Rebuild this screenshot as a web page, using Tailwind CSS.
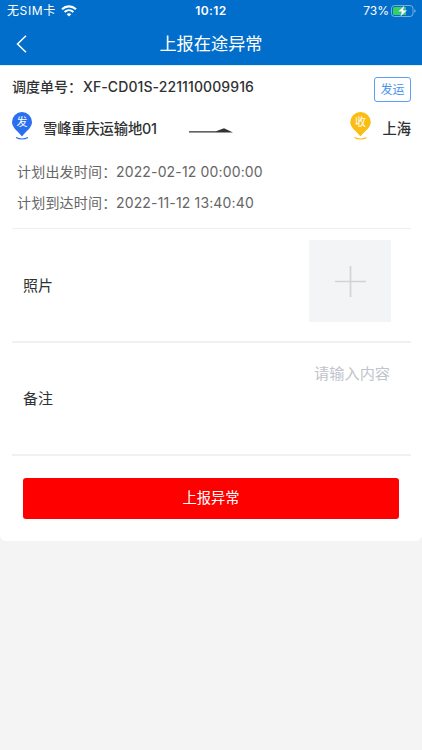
<!DOCTYPE html>
<html lang="zh-CN">

<head>
    <meta charset="UTF-8" />
    <meta name="viewport" content="width=device-width, initial-scale=1.0" />
    <title>上报在途异常</title>
    <script src="https://cdn.jsdelivr.net/npm/@tailwindcss/browser@4"></script>
</head>

<body class="bg-[#f4f4f4] font-['Inter','Noto_Sans_CJK_SC',sans-serif] text-[#303133]">
    <header class="bg-[#026ecb] text-white h-[65px]">
        <!-- Status bar -->
        <div class="grid grid-cols-3 items-center h-[22px] px-[7px] text-xs leading-none">
            <div class="flex items-center">
                <span class="tracking-[0.6px] whitespace-nowrap">无SIM卡</span>
                <svg class="ml-[5px] w-4 h-3" viewBox="0 0 16 12" fill="none" stroke="white" stroke-width="2.1">
                    <path d="M1 4.2C5 .4 11 .4 15 4.2" />
                    <path d="M3.6 7C6.2 4.6 9.8 4.6 12.4 7" />
                    <path d="M8 11.6 5.7 9.2Q8 7.2 10.3 9.2Z" fill="white" stroke="none" />
                </svg>
            </div>
            <div class="text-center font-semibold tracking-[0.4px]">10:12</div>
            <div class="flex items-center justify-end">
                <span>73%</span>
                <svg class="ml-[2px] -mr-[1px] w-[25px] h-3" viewBox="0 0 25 12">
                    <rect x=".5" y=".5" width="21.5" height="11" rx="3" fill="none" stroke="white" stroke-opacity=".45" />
                    <path d="M3.5 2H15V10H3.5Q2 10 2 8.5V3.5Q2 2 3.5 2Z" fill="#35d15c" />
                    <path d="M23.3 4.2Q24.7 4.8 24.7 6T23.3 7.8Z" fill="white" fill-opacity=".5" />
                    <path d="M13.4 .3 6.8 6.8H10.5L9.3 11.8 16.3 5.2H12.4Z" fill="white" stroke="#026ecb" stroke-width=".3" />
                </svg>
            </div>
        </div>
        <!-- Title bar -->
        <div class="grid grid-cols-[40px_1fr_40px] items-center h-[43px]">
            <button class="pl-4">
                <svg class="w-[11px] h-[18px]" viewBox="0 0 11 18" fill="none" stroke="white" stroke-width="1.5">
                    <path d="M10 .8 1.5 9 10 17.2" />
                </svg>
            </button>
            <h1 class="text-center text-[17.2px] leading-[42px]">上报在途异常</h1>
        </div>
    </header>

    <main class="bg-white rounded-b-md h-[476px] pl-3 pr-[11px] border-t border-[#d9f0fb]">
        <div class="flex items-center justify-between h-[43px]">
            <div class="flex -mt-[2px] text-sm font-medium whitespace-nowrap">
                <span class="w-[71px]">调度单号：</span>
                <span class="tracking-[0.1px]">XF-CD01S-221110009916</span>
            </div>
            <span class="mt-[3px] w-[37px] h-[25px] rounded-[3px] border border-[#5a9ef5] text-center text-xs leading-[23px] text-[#4592f0]">发运</span>
        </div>

        <!-- Route -->
        <div class="flex items-center h-9 mt-px text-[14.3px] font-medium">
            <svg class="w-5 h-7 -mt-[5px]" viewBox="0 0 20 28">
                <path d="M10 0A10 10 0 0 1 20 10C20 16 13.5 19.5 10 24.5 6.5 19.5 0 16 0 10A10 10 0 0 1 10 0Z" fill="#2a6fee" />
                <path d="M4 25.5Q10 28.5 16 25.5" fill="none" stroke="#2a6fee" stroke-width="1.2" />
                <text x="10" y="14" text-anchor="middle" font-size="11" font-weight="400" fill="white">发</text>
            </svg>
            <span class="ml-[11px] mt-[2px] w-[146px] tracking-[-0.15px]">雪峰重庆运输地01</span>
            <svg class="mt-[5px] w-11 h-[5px]" viewBox="0 0 44 5">
                <path d="M0 3.2H27L35 .2 44 4.6H0Z" fill="#333" />
            </svg>
            <svg class="ml-auto w-[21px] h-7 -mt-[5px]" viewBox="0 0 21 28">
                <path d="M10.5 0A10.3 10.3 0 0 1 20.8 10C20.8 16 14 19.5 10.5 24.5 7 19.5 .2 16 .2 10A10.3 10.3 0 0 1 10.5 0Z" fill="#fbbc13" />
                <path d="M4.5 25.5Q10.5 28.5 16.5 25.5" fill="none" stroke="#fbbc13" stroke-width="1.2" />
                <text x="10.5" y="14" text-anchor="middle" font-size="11" font-weight="400" fill="white">收</text>
            </svg>
            <span class="ml-[11px] mt-[2px]">上海</span>
        </div>

        <div class="pt-[10px] pl-[5px] h-[83px] border-b border-[#efefef] text-sm leading-[31px] text-[#666] whitespace-nowrap">
            <div class="flex">
                <span class="w-[99px] tracking-[0.2px]">计划出发时间：</span>
                <span class="tracking-[0.15px]">2022-02-12 00:00:00</span>
            </div>
            <div class="flex">
                <span class="w-[99px] tracking-[0.2px]">计划到达时间：</span>
                <span class="tracking-[0.15px]">2022-11-12 13:40:40</span>
            </div>
        </div>

        <div class="flex items-start justify-between h-[114px] pt-[11px] pl-[11px] pr-5 border-b-2 border-[#f1f1f1]">
            <span class="mt-[34px] text-[15px] leading-6">照片</span>
            <div class="flex items-center justify-center w-[82px] h-[82px] bg-[#f3f4f6]">
                <svg class="w-[31px] h-[31px]" viewBox="0 0 31 31" stroke="#d3d3d4" stroke-width="1.7">
                    <path d="M15.5 0V31M0 15.5H31" />
                </svg>
            </div>
        </div>

        <div class="flex items-start justify-between h-[113px] pl-[11px] pr-[21px] border-b-2 border-[#f1f1f1]">
            <span class="mt-11 text-[15px] leading-6">备注</span>
            <span class="mt-[19px] text-[15.2px] leading-6 text-[#c0c4cc]">请输入内容</span>
        </div>

        <div class="pl-[11px] pr-3 pt-[22px]">
            <button class="w-full h-[41px] rounded-[3px] bg-[#ff0000] pb-[2px] text-[14.3px] text-white">上报异常</button>
        </div>
    </main>
</body>

</html>
